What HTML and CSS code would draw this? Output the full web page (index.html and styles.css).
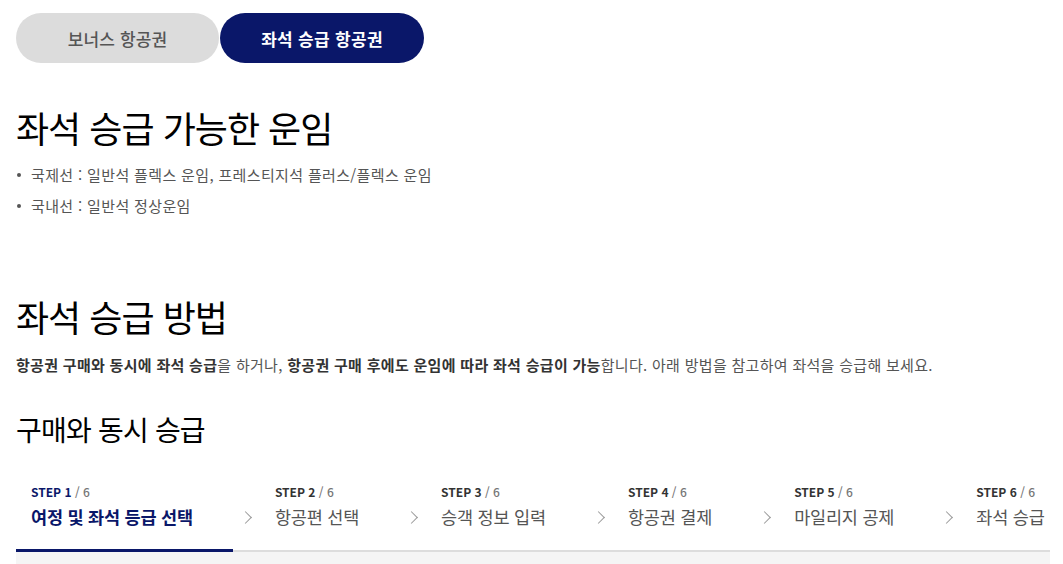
FILE: index.html
```html
<!DOCTYPE html>
<html lang="ko">
<head>
<meta charset="utf-8">
<link rel="stylesheet" href="styles.css">
</head>
<body>
<div class="page">
  <div class="tabs">
    <button class="tab">보너스 항공권</button>
    <button class="tab tab-active">좌석 승급 항공권</button>
  </div>

  <h2 class="h-lg">좌석 승급 가능한 운임</h2>
  <ul class="bullets">
    <li>국제선 : 일반석 플렉스 운임, 프레스티지석 플러스/플렉스 운임</li>
    <li>국내선 : 일반석 정상운임</li>
  </ul>

  <h2 class="h-lg h-second">좌석 승급 방법</h2>
  <p class="desc"><b>항공권 구매와 동시에 좌석 승급</b>을 하거나, <b>항공권 구매 후에도 운임에 따라 좌석 승급이 가능</b>합니다. 아래 방법을 참고하여 좌석을 승급해 보세요.</p>

  <h3 class="h-md">구매와 동시 승급</h3>

  <div class="steps-wrap">
    <ol class="steps">
      <li class="step step-active"><span class="step-num"><b>STEP 1</b> / 6</span><span class="step-name">여정 및 좌석 등급 선택</span></li>
      <li class="step"><span class="step-num"><b>STEP 2</b> / 6</span><span class="step-name">항공편 선택</span></li>
      <li class="step"><span class="step-num"><b>STEP 3</b> / 6</span><span class="step-name">승객 정보 입력</span></li>
      <li class="step"><span class="step-num"><b>STEP 4</b> / 6</span><span class="step-name">항공권 결제</span></li>
      <li class="step"><span class="step-num"><b>STEP 5</b> / 6</span><span class="step-name">마일리지 공제</span></li>
      <li class="step"><span class="step-num"><b>STEP 6</b> / 6</span><span class="step-name">좌석 승급 신청</span></li>
    </ol>
    <div class="panel"></div>
  </div>
</div>
</body>
</html>
```

FILE: styles.css
```css
* { box-sizing: border-box; }
html, body { margin: 0; padding: 0; background: #fff; }
body {
  font-family: "Noto Sans CJK KR", "Noto Sans", sans-serif;
  color: #111;
  overflow: hidden;
}
.page {
  width: 1034px;
  margin-left: 16px;
  padding-top: 13px;
  overflow: hidden;
}
.tabs { display: flex; gap: 1px; }
.tab {
  width: 203px;
  height: 50px;
  border: 0;
  border-radius: 25px;
  background: #dcdcdc;
  color: #555;
  font-family: inherit;
  font-size: 17px;
  font-weight: 500;
  padding: 0;
  letter-spacing: 0.1px;
}
.tab-active {
  width: 204px;
  background: #0a1769;
  color: #fff;
  font-weight: 700;
  letter-spacing: 0.3px;
}
.h-lg {
  margin: 40px 0 0;
  font-size: 36px;
  font-weight: 400;
  line-height: 48px;
  letter-spacing: -1px;
  color: #000;
}
.h-second { margin-top: 71px; }
.bullets {
  list-style: none;
  margin: 8px 0 0;
  padding: 0;
}
.bullets li {
  position: relative;
  padding-left: 15px;
  font-size: 15px;
  line-height: 31px;
  color: #555;
  letter-spacing: 0.35px;
}
.bullets li::before {
  content: "";
  position: absolute;
  left: 1px;
  top: 14px;
  width: 4px;
  height: 4px;
  border-radius: 50%;
  background: #555;
}
.desc {
  margin: 13px 0 0;
  font-size: 15px;
  line-height: 24px;
  color: #555;
  letter-spacing: 0.3px;
}
.desc b { color: #333; font-weight: 700; }
.h-md {
  margin: 33px 0 0;
  font-size: 28px;
  font-weight: 400;
  line-height: 38px;
  letter-spacing: -0.8px;
  color: #000;
}
.steps-wrap { margin-top: 35px; }
.steps {
  display: flex;
  margin: 0;
  padding: 0;
  list-style: none;
  border-bottom: 2px solid #ddd;
  white-space: nowrap;
}
.step {
  position: relative;
  flex: none;
  display: flex;
  flex-direction: column;
  padding: 0 40px 19px 15px;
  margin-bottom: -2px;
  border-bottom: 3px solid transparent;
}
.step + .step { padding-left: 42px; }
.step + .step::before {
  content: "";
  position: absolute;
  left: 8px;
  top: 30px;
  width: 8px;
  height: 8px;
  border-top: 1.5px solid #999;
  border-right: 1.5px solid #999;
  transform: rotate(45deg);
}
.step-active { border-bottom-color: #0a1769; }
.step-num {
  font-size: 12px;
  line-height: 18px;
  color: #777;
  font-weight: 500;
}
.step-num b { color: #333; font-weight: 700; }
.step-active .step-num b { color: #0a1769; }
.step-name {
  margin-top: 3px;
  font-size: 17.5px;
  line-height: 26px;
  color: #555;
  letter-spacing: -0.2px;
}
.step-active .step-name { color: #0a1769; font-weight: 700; }
.panel { height: 40px; background: #f5f5f5; }
```
